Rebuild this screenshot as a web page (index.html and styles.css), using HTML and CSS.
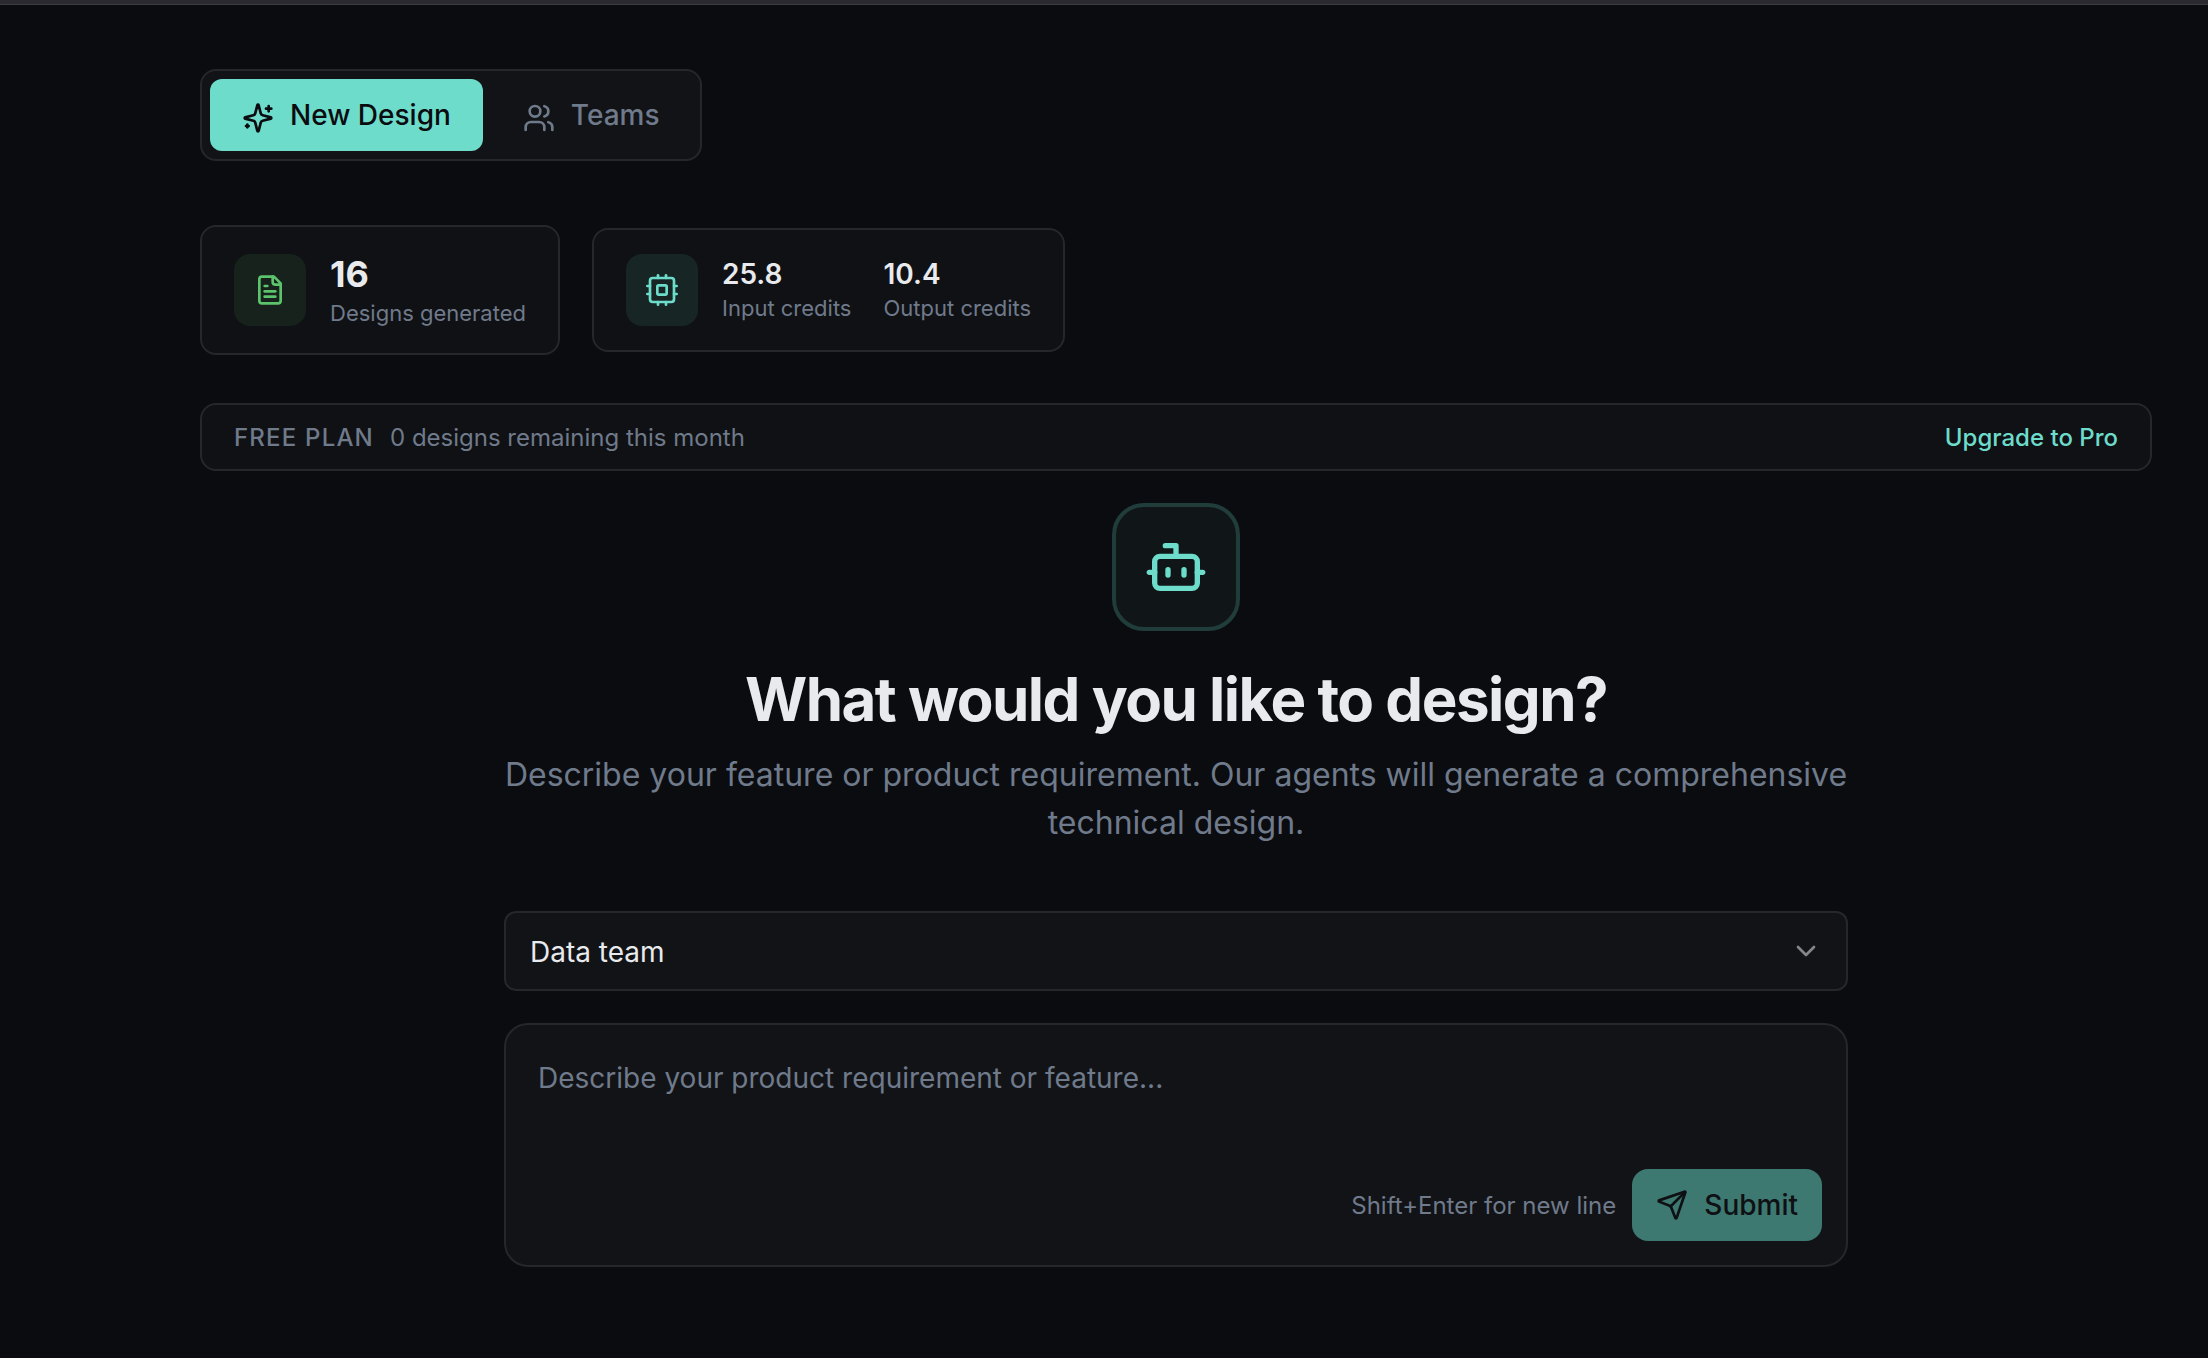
FILE: index.html
```html
<!DOCTYPE html>
<html lang="en">
<head>
  <meta charset="UTF-8">
  <meta name="viewport" content="width=device-width, initial-scale=1.0">
  <title>New Design</title>
  <link rel="stylesheet" href="styles.css">
</head>
<body>

  <div class="top-strip"></div>

  <main class="page">

    <!-- Tabs -->
    <nav class="tabs">
      <button class="tab active" type="button">
        <svg class="icon" viewBox="0 0 24 24"><path d="M9.937 15.5A2 2 0 0 0 8.5 14.063l-6.135-1.582a.5.5 0 0 1 0-.962L8.5 9.936A2 2 0 0 0 9.937 8.5l1.582-6.135a.5.5 0 0 1 .963 0L14.063 8.5A2 2 0 0 0 15.5 9.937l6.135 1.581a.5.5 0 0 1 0 .964L15.5 14.063a2 2 0 0 0-1.437 1.437l-1.582 6.135a.5.5 0 0 1-.963 0z"/><path d="M20 3v4"/><path d="M22 5h-4"/><path d="M4 17v2"/><path d="M5 18H3"/></svg><span>New Design</span>
      </button>
      <button class="tab" type="button">
        <svg class="icon" viewBox="0 0 24 24"><path d="M16 21v-2a4 4 0 0 0-4-4H6a4 4 0 0 0-4 4v2"/><circle cx="9" cy="7" r="4"/><path d="M22 21v-2a4 4 0 0 0-3-3.87"/><path d="M16 3.13a4 4 0 0 1 0 7.75"/></svg><span>Teams</span>
      </button>
    </nav>

    <!-- Usage stats -->
    <section class="stats">
      <div class="stat-card">
        <div class="stat-icon green">
          <svg class="icon" viewBox="0 0 24 24"><path d="M15 2H6a2 2 0 0 0-2 2v16a2 2 0 0 0 2 2h12a2 2 0 0 0 2-2V7Z"/><path d="M14 2v4a2 2 0 0 0 2 2h4"/><path d="M10 9H8"/><path d="M16 13H8"/><path d="M16 17H8"/></svg>
        </div>
        <div class="stat">
          <div class="stat-value large">16</div>
          <div class="stat-label">Designs generated</div>
        </div>
      </div>
      <div class="stat-card">
        <div class="stat-icon teal">
          <svg class="icon" viewBox="0 0 24 24"><rect width="18" height="18" x="3" y="3" rx="2"/><rect width="7" height="7" x="8.5" y="8.5" rx="1"/><path d="M15 1v2"/><path d="M15 21v2"/><path d="M1 15h2"/><path d="M1 9h2"/><path d="M21 15h2"/><path d="M21 9h2"/><path d="M9 1v2"/><path d="M9 21v2"/></svg>
        </div>
        <div class="credits">
          <div class="stat">
            <div class="stat-value">25.8</div>
            <div class="stat-label">Input credits</div>
          </div>
          <div class="stat">
            <div class="stat-value">10.4</div>
            <div class="stat-label">Output credits</div>
          </div>
        </div>
      </div>
    </section>

    <!-- Plan banner -->
    <section class="plan-banner">
      <span class="plan-name">Free plan</span>
      <span>0 designs remaining this month</span>
      <a class="upgrade-link" href="#upgrade">Upgrade to Pro</a>
    </section>

    <!-- Prompt -->
    <section class="composer">
      <div class="bot-badge">
        <svg class="icon bot-icon" viewBox="0 0 24 24"><path d="M12 8V4H8"/><rect width="16" height="12" x="4" y="8" rx="2"/><path d="M2 14h2"/><path d="M20 14h2"/><path d="M15 13v2"/><path d="M9 13v2"/></svg>
      </div>
      <h1>What would you like to design?</h1>
      <p class="subtitle">Describe your feature or product requirement. Our agents will generate a comprehensive technical design.</p>

      <form class="design-form">
        <div class="team-field">
          <select class="team-select" id="team" aria-label="Team">
            <option>Data team</option>
          </select>
          <svg class="icon chevron" viewBox="0 0 24 24"><path d="m6 9 6 6 6-6"/></svg>
        </div>

        <div class="prompt-box">
          <textarea id="prompt" aria-label="Requirement" placeholder="Describe your product requirement or feature..."></textarea>
          <div class="prompt-footer">
            <span class="hint">Shift+Enter for new line</span>
            <button class="submit-btn" type="submit" disabled>
              <svg class="icon" viewBox="0 0 24 24"><path d="M14.536 21.686a.5.5 0 0 0 .937-.024l6.5-19a.496.496 0 0 0-.635-.635l-19 6.5a.5.5 0 0 0-.024.937l7.93 3.18a2 2 0 0 1 1.112 1.11z"/><path d="m21.854 2.147-10.94 10.939"/></svg>
              Submit
            </button>
          </div>
        </div>
      </form>
    </section>

  </main>

</body>
</html>
```

FILE: styles.css
```css
* {
  box-sizing: border-box;
}
body {
  margin: 0;
  min-height: 100vh;
  background-color: #0b0c10;
  color: #e8eaed;
  font-family: Inter, sans-serif;
  font-size: 28px;
}
button,
select,
textarea {
  font: inherit;
  color: inherit;
}
.top-strip {
  height: 5px;
  background-color: #2b2a30;
  border-bottom: 1px solid #3c3b41;
}
.page {
  padding: 64px 56px 64px 200px;
}
.icon {
  width: 32px;
  height: 32px;
  flex-shrink: 0;
  fill: none;
  stroke: currentColor;
  stroke-width: 2;
  stroke-linecap: round;
  stroke-linejoin: round;
}

/* Tabs */
.tabs {
  display: flex;
  gap: 8px;
  width: fit-content;
  padding: 8px;
  background-color: #121317;
  border: 2px solid #26272b;
  border-radius: 16px;
}
.tab {
  height: 72px;
  padding: 2px 32px 0;
  background: none;
  border: none;
  border-radius: 12px;
  color: #6f7a8b;
  font-weight: 500;
  cursor: pointer;
}
.tab.active {
  background-color: #6ddccb;
  color: #0b0c10;
}
.tab .icon {
  margin-right: 16px;
  vertical-align: middle;
}

/* Stats */
.stats {
  display: flex;
  align-items: center;
  gap: 32px;
  margin-top: 64px;
}
.stat-card {
  display: flex;
  align-items: center;
  gap: 24px;
  padding: 24px 32px;
  background-color: #101114;
  border: 2px solid #26272b;
  border-radius: 16px;
}
.stat-icon {
  display: flex;
  align-items: center;
  justify-content: center;
  width: 72px;
  height: 72px;
  border-radius: 16px;
}
.stat-icon.green {
  background-color: #16221b;
  color: #5cc46c;
}
.stat-icon.teal {
  background-color: #172525;
  color: #6ddccb;
}
.credits {
  display: flex;
  gap: 32px;
}
.stat-value {
  font-weight: 600;
  line-height: 36px;
}
.stat-value.large {
  font-size: 36px;
  font-weight: 700;
  line-height: 46px;
}
.stat-label {
  color: #6f7a8b;
  font-size: 22px;
  line-height: 32px;
}

/* Plan banner */
.plan-banner {
  display: flex;
  align-items: center;
  gap: 16px;
  margin-top: 48px;
  padding: 14px 32px 12px;
  background-color: #101114;
  border: 2px solid #26272b;
  border-radius: 16px;
  color: #6f7a8b;
  font-size: 24px;
  line-height: 38px;
}
.plan-name {
  font-weight: 500;
  letter-spacing: 0.05em;
  text-transform: uppercase;
}
.upgrade-link {
  margin-left: auto;
  color: #6ddccb;
  font-weight: 500;
  text-decoration: none;
}

/* Prompt */
.composer {
  max-width: 1344px;
  margin: 32px auto 0;
  text-align: center;
}
.bot-badge {
  display: flex;
  align-items: center;
  justify-content: center;
  width: 128px;
  height: 128px;
  margin: 0 auto 32px;
  background-color: #101617;
  border: 4px solid #203c3b;
  border-radius: 32px;
  color: #6ddccb;
}
.bot-icon {
  width: 64px;
  height: 64px;
}
h1 {
  margin: 0 0 16px;
  font-size: 60px;
  font-weight: 700;
  line-height: 72px;
  letter-spacing: -0.025em;
}
.subtitle {
  margin: 0;
  color: #6f7a8b;
  font-size: 32px;
  line-height: 48px;
}
.design-form {
  display: flex;
  flex-direction: column;
  gap: 32px;
  margin-top: 64px;
  text-align: left;
}
.team-field {
  display: grid;
  align-items: center;
}
.team-field > * {
  grid-area: 1 / 1;
}
.team-select {
  appearance: none;
  width: 100%;
  height: 80px;
  padding: 2px 24px 0;
  background-color: #121317;
  border: 2px solid #26272b;
  border-radius: 12px;
}
.chevron {
  justify-self: end;
  margin-right: 26px;
  color: #85868a;
  pointer-events: none;
}
.prompt-box {
  display: flex;
  flex-direction: column;
  background-color: #121317;
  border: 2px solid #26272b;
  border-radius: 24px;
}
.prompt-box textarea {
  height: 144px;
  padding: 32px 32px 0;
  background: none;
  border: none;
  outline: none;
  line-height: 42px;
  resize: none;
}
.prompt-box textarea::placeholder {
  color: #6f7a8b;
}
.prompt-footer {
  display: flex;
  align-items: center;
  justify-content: flex-end;
  gap: 16px;
  padding: 0 24px 24px;
}
.hint {
  color: #6f7a8b;
  font-size: 24px;
}
.submit-btn {
  display: flex;
  align-items: center;
  gap: 16px;
  height: 72px;
  padding: 0 24px;
  background-color: #3d7871;
  border: none;
  border-radius: 16px;
  color: #0f1014;
  font-weight: 500;
}
```
